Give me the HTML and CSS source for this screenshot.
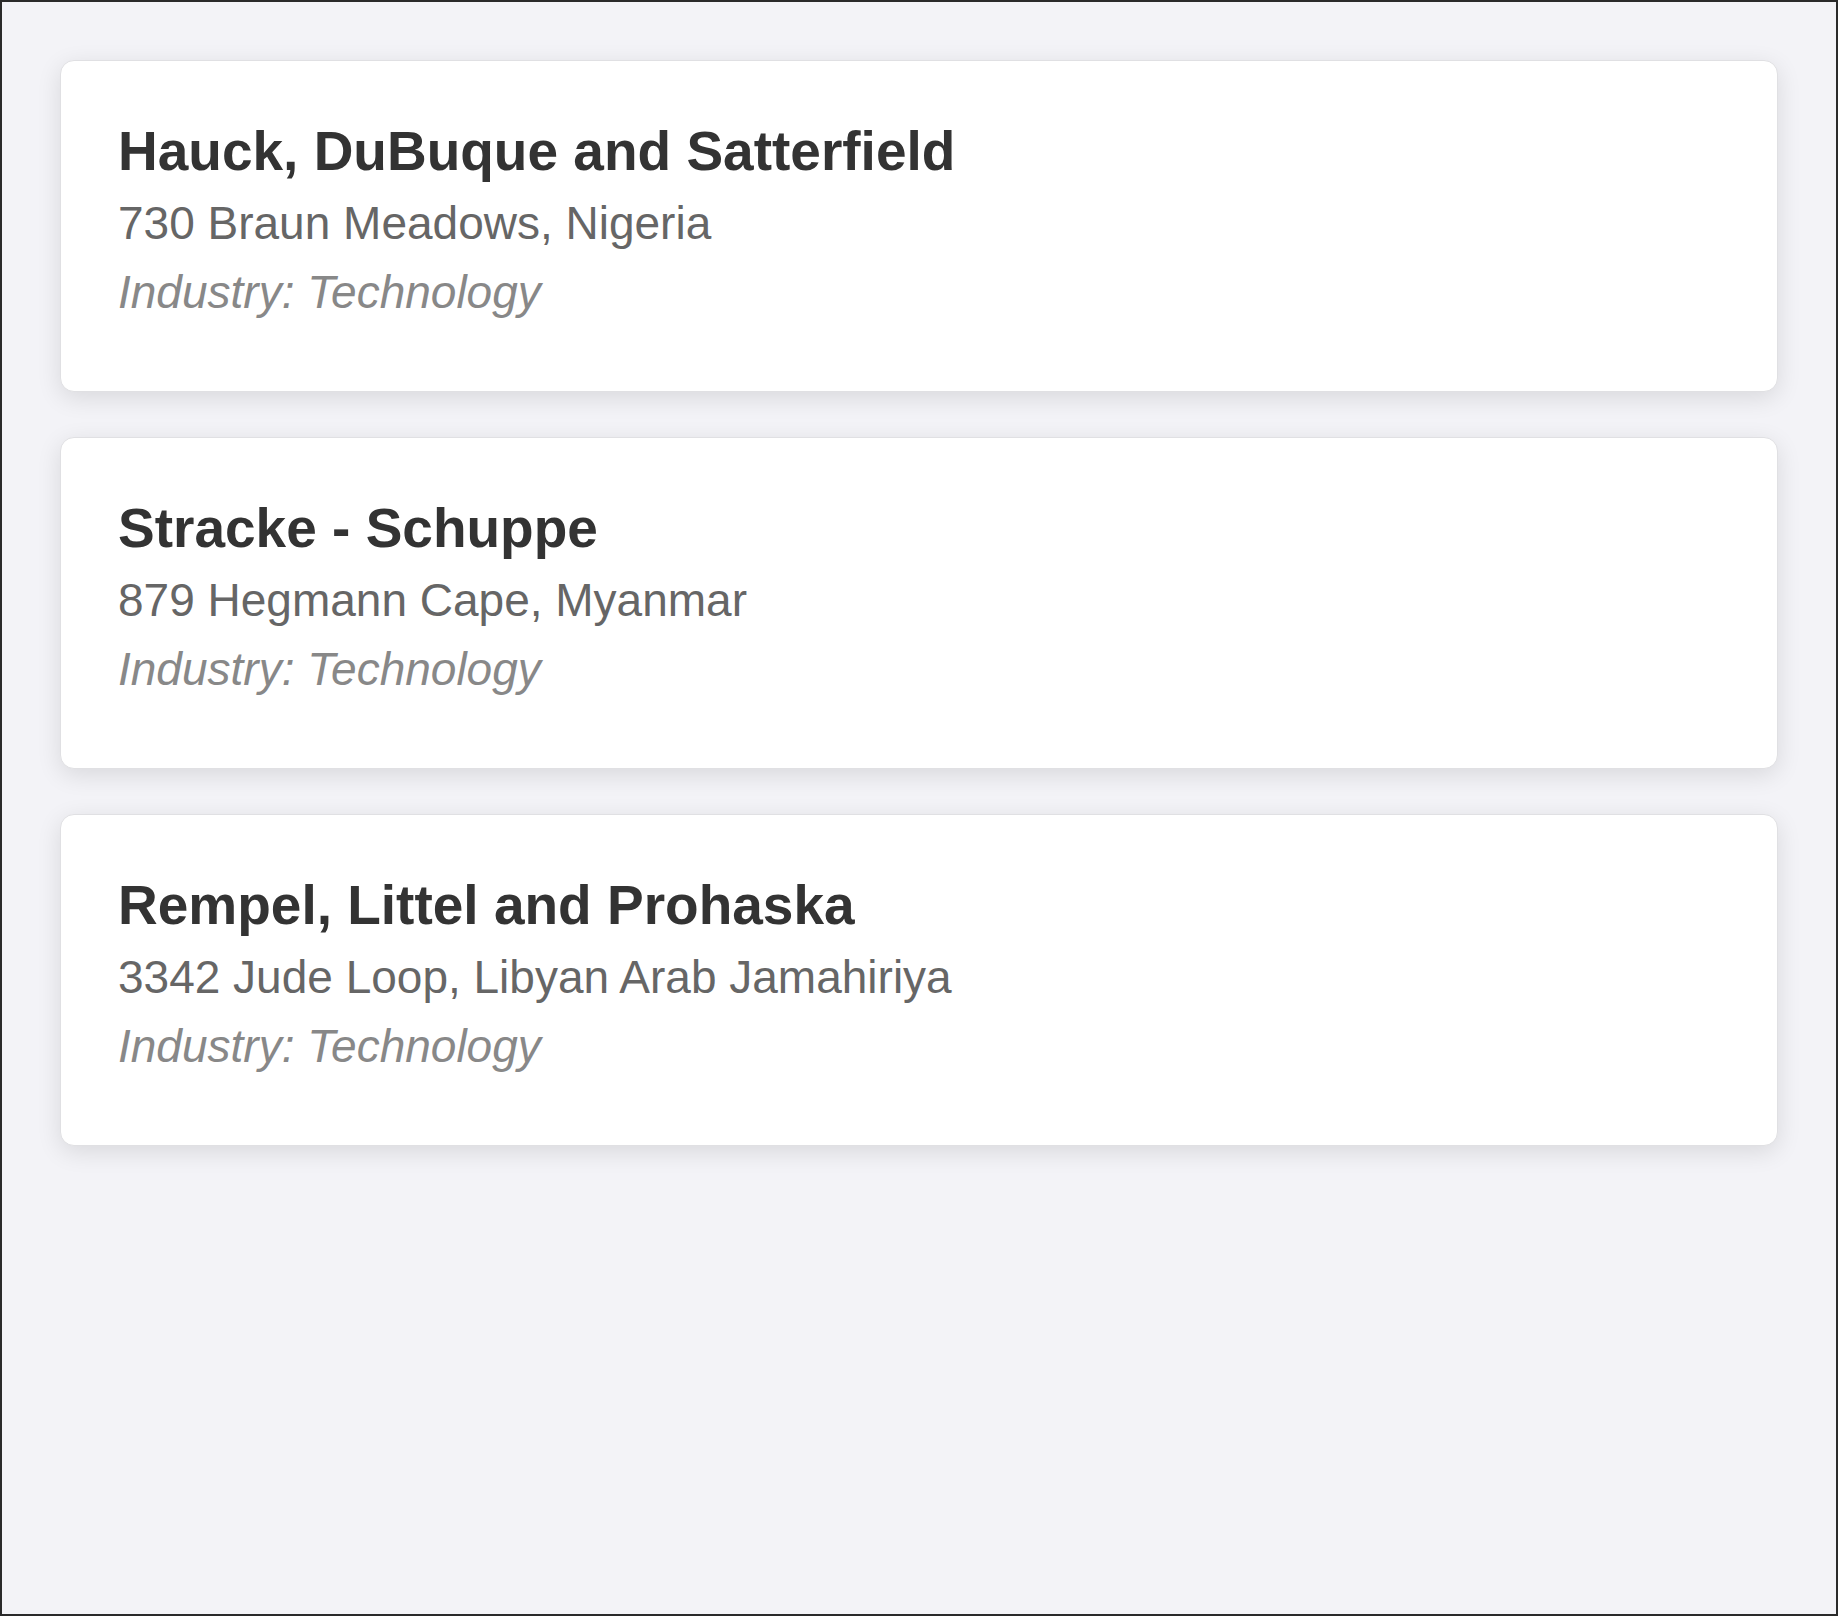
FILE: index.html
```html
<!DOCTYPE html>
<html lang="en">
<head>
<meta charset="utf-8">
<title>Companies</title>
<link rel="stylesheet" href="styles.css">
</head>
<body>
<div class="frame">
  <div class="list">
    <div class="card">
      <h2 class="name">Hauck, DuBuque and Satterfield</h2>
      <p class="address">730 Braun Meadows, Nigeria</p>
      <p class="industry">Industry: Technology</p>
    </div>
    <div class="card">
      <h2 class="name">Stracke - Schuppe</h2>
      <p class="address">879 Hegmann Cape, Myanmar</p>
      <p class="industry">Industry: Technology</p>
    </div>
    <div class="card">
      <h2 class="name">Rempel, Littel and Prohaska</h2>
      <p class="address">3342 Jude Loop, Libyan Arab Jamahiriya</p>
      <p class="industry">Industry: Technology</p>
    </div>
  </div>
</div>
</body>
</html>
```
FILE: styles.css
```css
html, body {
  margin: 0;
  padding: 0;
}
body {
  font-family: "Liberation Sans", Arial, Helvetica, sans-serif;
  background: #f3f3f7;
}
.frame {
  box-sizing: border-box;
  width: 1838px;
  height: 1616px;
  border: 2px solid #2a2a2a;
  background: #f3f3f7;
  padding: 58px;
}
.list {
  display: flex;
  flex-direction: column;
  gap: 45px;
}
.card {
  background: #ffffff;
  border: 1px solid #e0e0e3;
  border-radius: 14px;
  box-shadow: 0 6px 24px rgba(0, 0, 0, 0.11);
  padding: 58px 57px 64px;
}
.name {
  margin: 0 0 6px;
  font-size: 55px;
  line-height: 64px;
  font-weight: 700;
  color: #333333;
}
.address {
  margin: 0;
  font-size: 46px;
  line-height: 69px;
  color: #666666;
}
.industry {
  margin: 0;
  font-size: 46px;
  line-height: 69px;
  font-style: italic;
  color: #888888;
}
```
